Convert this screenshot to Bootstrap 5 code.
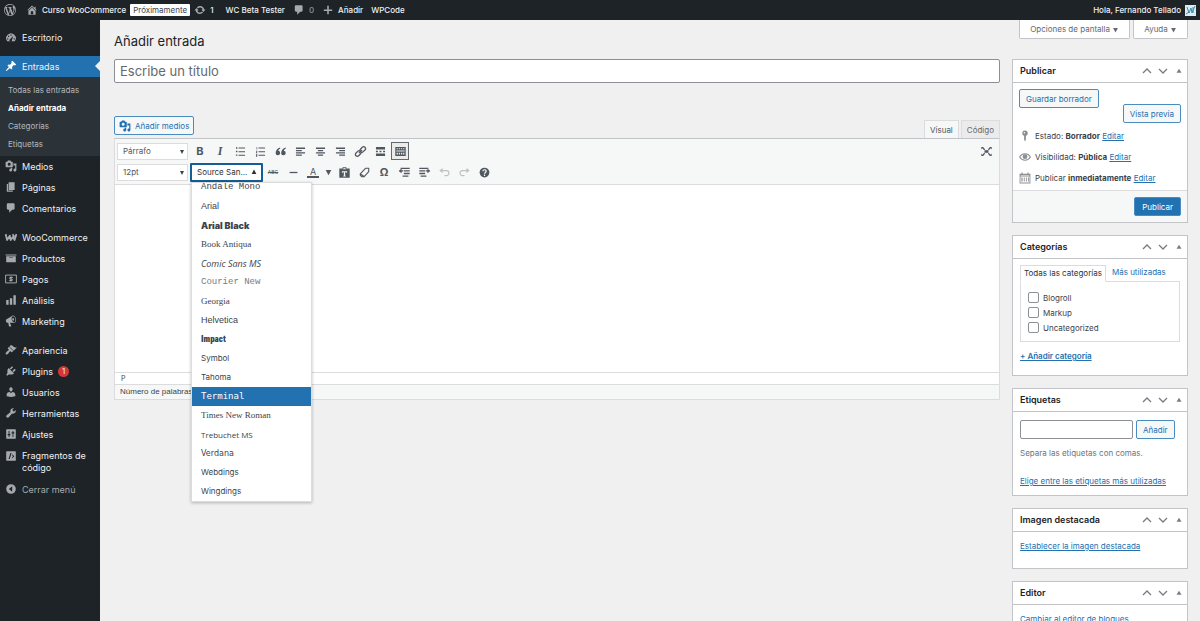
<!DOCTYPE html>
<html lang="es">
<head>
<meta charset="utf-8">
<meta name="viewport" content="width=device-width, initial-scale=1">
<title>Añadir entrada</title>
<link href="https://cdn.jsdelivr.net/npm/bootstrap@5.3.0/dist/css/bootstrap.min.css" rel="stylesheet">
<style>
:root{--ink:#1d2327;--ui:#3c434a;--blue:#2271b1;--line:#c3c4c7;--soft:#f6f7f7}
html{scrollbar-width:none}
body{font:8px/12px Inter,"Liberation Sans",sans-serif;color:var(--ui);background:#f0f0f1}
svg{fill:currentColor;flex:none}
.ic{width:12px;height:12px}
a{color:var(--blue)}
.adminbar{height:20px;background:var(--ink);color:#f0f0f1;padding:0 4px;font-weight:500}
.adminbar a{color:inherit;text-decoration:none}
.adminbar .ic{color:#a7aaad}
.adminbar .soon{background:#fff;color:#3c434a;padding:0 3px;border-radius:1px;font-weight:400}
.site{margin-left:10px}
.avatar{width:11px;height:11px}
.sidebar{width:100px;background:var(--ink);padding-top:7px;flex:none}
.sidebar a{color:#f0f0f1;text-decoration:none}
.menu-item{min-height:21px;padding:4px 5px;gap:5px;line-height:13px;font-size:9px;font-weight:400;display:flex;align-items:flex-start}
.menu-item .ic{color:#a7aaad}
.menu-item.wide-text{line-height:12px;padding:5px}
.menu-gap{margin-top:8px}
.menu-item.current{background:var(--blue);position:relative}
.menu-item.current .ic{color:#fff}
.menu-item.current::after{content:"";position:absolute;right:0;top:5px;border:5px solid transparent;border-right-color:#f0f0f1;border-left-width:0}
.submenu{background:#2c3338;padding:4px 0 3px}
.submenu a{display:block;line-height:18px;padding-left:8px;color:#b4b9be}
.submenu a.on{color:#fff;font-weight:700}
.count{background:#d63638;border-radius:6px;min-width:11px;height:11px;line-height:11px;text-align:center;font-size:8px;align-self:center}
.sidebar .closer{color:#a7aaad}
.main-col{padding:0 12px 0 14px}
.meta-tabs{gap:3px}
.meta-tabs button{background:#fff;border:1px solid var(--line);border-top:0;border-radius:0 0 2px 2px;color:#646970;height:19px;padding:0 10px}
h1{font-size:13px;line-height:19px;font-weight:400;color:var(--ink);margin:0}
.columns{gap:12px}
.title-input{height:24px;border:1px solid #8c8f94;border-radius:2px;font-size:13px;padding:0 5px;color:#2c3338}
.title-input::placeholder{color:#646970;opacity:1}
.side-col{width:176px;flex:none}
.wbtn{border:1px solid #4a8bc0;border-radius:2px;color:var(--blue);background:var(--soft);height:19px;padding:0 6px}
.wbtn.media-btn{padding:0 4px;margin-bottom:3px}
.wbtn.solid{background:var(--blue);color:#fff;padding:0 7px}
.preview-row{margin-top:-4px}
.ed-head{margin-top:33px}
.ed-tabs{gap:2px}
.ed-tabs button{height:18px;border:1px solid #dcdcde;border-bottom:0;background:#ebebec;color:#646970;padding:0 5px}
.ed-tabs .on{background:var(--soft);color:#50575e}
.editor{border:1px solid #dcdcde;border-top-color:var(--line);background:#fff}
.toolbars{background:var(--soft);border-bottom:1px solid #dcdcde;padding:2px 3px 2px 2px}
.tool-row{height:20px}
.tool-row + .tool-row{margin-top:1px}
.picker{appearance:none;width:71px;height:17px;border:1px solid #dcdcde;background:#fff;font-size:8px;color:#50575e;padding:0 5px;margin-right:2px}
.pick-wrap{position:relative}
.pick-wrap::after{content:"";position:absolute;right:6px;top:7px;border:solid transparent;border-width:4px 2px 0;border-top-color:#3c434a;pointer-events:none}
.font-btn{width:73px;height:19px;border:2px solid #135e96;background:#fff;border-radius:1px;padding:0 4px 0 5px;color:#2c3338}
.tb{width:20px;height:18px;border:0;background:none;padding:0;color:#50575e;display:flex;align-items:center;justify-content:center}
.tb svg{width:13px;height:13px}
.tb b{font-size:11px}
.tb i{font:italic 700 12px "Liberation Serif",serif}
.tb s{font-size:5px}
.tb .swatch{font-size:9px;line-height:9px;border-bottom:2px solid #50575e;padding:0 3px}
.tb.faded{color:#bfc2c5}
.tb.active{width:18px;margin:0 1px;border:1px solid #646970;background:#ebebeb}
.tb.caret{width:11px}
.tb.caret svg{width:7px}
.font-list{position:absolute;left:1px;top:19px;width:121px;height:320px;overflow:hidden;background:#fff;border:1px solid #dcdcde;box-shadow:0 1px 3px rgba(0,0,0,.25);z-index:5;display:flex;flex-direction:column;justify-content:flex-end}
.font-list button{border:0;background:none;text-align:left;height:19px;line-height:19px;padding:0 9px;color:#3c434a;flex:none;white-space:nowrap}
.font-list .chosen{background:var(--blue);color:#fff}
.f-mono{font-family:"Liberation Mono",monospace;font-size:9px}
.font-list .f-light{color:#787c82}
.f-sans{font-family:"Liberation Sans",sans-serif;font-size:9px}
.f-black{font-family:Inter,sans-serif;font-size:9px;font-weight:900}
.f-serif{font-family:"Liberation Serif",serif;font-size:9px}
.f-comic{font-family:"Open Sans",sans-serif;font-size:9px;font-style:italic;font-weight:500}
.f-impact{font-family:"Roboto Condensed","Liberation Sans Narrow","DejaVu Sans Condensed",sans-serif;font-size:9px;font-weight:900}
.f-term{font-family:"DejaVu Sans Mono",monospace;font-size:9px}
.f-treb{font-family:"Open Sans",sans-serif;font-size:8px}
.f-verd{font-family:"DejaVu Sans",sans-serif;font-size:8px}
.canvas{height:187px;border:0;resize:none;display:block;width:100%;outline:0}
.path{height:12px;border-top:1px solid #dcdcde;padding:0 6px;font-size:7px}
.status{height:15px;border-top:1px solid #dcdcde;background:var(--soft);padding:1px 5px;font-family:"Liberation Sans",sans-serif}
.box{background:#fff;border:1px solid var(--line);margin-bottom:12px}
.box header{height:23px;border-bottom:1px solid var(--line);padding:0 0 0 7px}
.box h2{font-size:9px;line-height:12px;font-weight:600;color:var(--ink);margin:0}
.box header button{border:0;background:none;padding:0;color:#787c82;width:16px;height:16px;display:flex;align-items:center;justify-content:center}
.box header svg{width:10px;height:10px}
.box .inner{padding:8px 7px}
.box .cat-inner{padding:6px 7px 13px}
.publish-inner{padding:6px}
.facts{gap:9px;padding-top:7px}
.facts svg{color:#8c8f94}
.publish-foot{background:var(--soft);border-top:1px solid #dcdcde;padding:6px}
.cat-tabs a{padding:0 6px;line-height:15px;text-decoration:none}
.cat-tabs .on{border:1px solid #dcdcde;border-bottom-color:#fff;color:#2c3338;margin-bottom:-1px;background:#fff;padding:0 3px}
.cat-panel{border:1px solid #dcdcde;padding:8px 7px 6px}
.cat-panel label{display:flex;align-items:center;gap:4px;height:15px}
.cat-panel input{appearance:none;width:11px;height:11px;border:1px solid #8c8f94;border-radius:2px;background:#fff;margin:0}
.tag-row{gap:3px}
.tag-input{height:19px;border:1px solid #8c8f94;border-radius:2px;width:113px;padding:0 4px;font-size:8px}
</style>
</head>
<body>
<svg width="0" height="0" class="position-absolute" aria-hidden="true">
<symbol id="wp" viewBox="0 0 20 20"><path d="M20 10c0-5.51-4.49-10-10-10C4.48 0 0 4.49 0 10c0 5.52 4.48 10 10 10 5.51 0 10-4.48 10-10zM7.78 15.37L4.37 6.22c.55-.02 1.17-.08 1.17-.08.5-.06.44-1.13-.06-1.11 0 0-1.45.11-2.37.11-.18 0-.37 0-.58-.01C4.12 2.69 6.87 1.11 10 1.11c2.33 0 4.45.87 6.05 2.34-.68-.11-1.65.39-1.65 1.58 0 .74.45 1.36.9 2.1.35.61.55 1.36.55 2.46 0 1.49-1.4 5-1.4 5l-3.03-8.37c.54-.02.82-.17.82-.17.5-.05.44-1.25-.06-1.22 0 0-1.44.12-2.38.12-.87 0-2.33-.12-2.33-.12-.5-.03-.56 1.2-.06 1.22l.92.08 1.26 3.41zM17.41 10c.24-.64.74-1.87.43-4.25.7 1.29 1.05 2.71 1.05 4.25 0 3.29-1.73 6.24-4.4 7.78.97-2.59 1.94-5.2 2.92-7.78zM6.1 18.09C3.12 16.65 1.11 13.53 1.11 10c0-1.3.23-2.48.72-3.59C3.25 10.3 4.67 14.2 6.1 18.09zm4.03-6.63l2.58 6.98c-.86.29-1.76.45-2.71.45-.79 0-1.57-.11-2.29-.33.81-2.38 1.62-4.74 2.42-7.1z"/></symbol>
<symbol id="home" viewBox="0 0 20 20"><path d="M16 8.5l1.53 1.53-1.06 1.06L10 4.6l-6.47 6.49-1.06-1.06L10 2.5l4 4v-2h2v4zm-6-2.46l6 5.99V18H4v-5.97zM12 17v-5H8v5h4z"/></symbol>
<symbol id="update" viewBox="0 0 20 20"><path d="M10.2 3.28c3.53 0 6.43 2.61 6.92 6h2.08l-3.5 4-3.5-4h2.32c-.45-1.97-2.21-3.45-4.32-3.45-1.45 0-2.73.71-3.54 1.78L4.95 5.66C6.23 4.2 8.11 3.28 10.2 3.28zm-.4 13.44c-3.52 0-6.43-2.61-6.92-6H.8l3.5-4 3.5 4H5.48c.45 1.97 2.21 3.45 4.32 3.45 1.45 0 2.73-.71 3.54-1.78l1.71 1.95c-1.28 1.46-3.15 2.38-5.25 2.38z"/></symbol>
<symbol id="comment" viewBox="0 0 20 20"><path d="M5 2h9c1.1 0 2 .9 2 2v7c0 1.1-.9 2-2 2h-2l-5 5v-5H5c-1.1 0-2-.9-2-2V4c0-1.1.9-2 2-2z"/></symbol>
<symbol id="plus" viewBox="0 0 20 20"><path d="M17 9v2.6h-5.7V17H8.700v-5.400H3V9h5.700V3h2.600v6z"/></symbol>
<symbol id="dash" viewBox="0 0 20 20"><path fill-rule="evenodd" d="M3.76 17h12.48A8 8 0 1 0 3.760 17zM9 6h2v2H9zM5 8h2v2H5zM3.500 12h2v2h-2zM14.500 12h2v2h-2zM8 14l6-6-2.500 7A2 2 0 1 1 8 14z"/></symbol>
<symbol id="pin" viewBox="0 0 20 20"><path d="M10.440 3.020l1.820-1.820 6.360 6.350-1.830 1.820c-1.050-.68-2.480-.57-3.410.36l-.75.75c-.92.93-1.040 2.350-.35 3.410l-1.830 1.820-2.410-2.410-2.800 2.790c-.42.42-3.380 2.710-3.800 2.290s1.860-3.390 2.280-3.810l2.790-2.790L4.100 9.360l1.830-1.820c1.050.69 2.480.57 3.400-.36l.75-.75c.93-.92 1.050-2.350.36-3.410z"/></symbol>
<symbol id="media" viewBox="0 0 20 20"><path d="M13 11V4c0-.55-.45-1-1-1h-1.670L9 1H5L3.670 3H2c-.55 0-1 .45-1 1v7c0 .55.45 1 1 1h10c.55 0 1-.45 1-1zM7 4.500c1.380 0 2.500 1.120 2.500 2.500S8.380 9.500 7 9.500 4.500 8.380 4.500 7 5.620 4.500 7 4.500zM14 6h5v10.500c0 1.380-1.120 2.500-2.500 2.500S14 17.880 14 16.500s1.120-2.500 2.500-2.500c.17 0 .34.02.5.05V9h-3V6zm-4 8.050V13h2v3.500c0 1.380-1.120 2.500-2.500 2.500S7 17.880 7 16.500 8.120 14 9.500 14c.17 0 .34.02.5.05z"/></symbol>
<symbol id="page" viewBox="0 0 20 20"><path d="M6 15V2h10v13H6zm-1 1h8v2H3V5h2v11z"/></symbol>
<symbol id="woo" viewBox="0 0 20 20"><path d="M1 5l2.500 10L8 8l1.500 7L13 10l3 5 3-10M12.500 5.500L16 10" fill="none" stroke="currentColor" stroke-width="3" stroke-linejoin="round"/></symbol>
<symbol id="archive" viewBox="0 0 20 20"><path d="M19 4v2H1V4h18zM2 7h16v10H2V7zm11 3V9H7v1h6z"/></symbol>
<symbol id="pay" viewBox="0 0 20 20"><path d="M1 3.500h18v13H1zM13 7.500H8v2.500h4v2.500H7M10 5.500v9" fill="none" stroke="currentColor" stroke-width="1.600"/></symbol>
<symbol id="bars" viewBox="0 0 20 20"><path d="M18 18V2h-4v16h4zm-6 0V7H8v11h4zm-6 0v-8H2v8h4z"/></symbol>
<symbol id="mega" viewBox="0 0 20 20"><path d="M18.150 5.940c.46 1.620.38 3.220-.02 4.480-.42 1.280-1.260 2.180-2.300 2.480-.16.06-.26.06-.4.06-.06.02-.12.02-.18.02-.06.02-.14.02-.22.02h-6.800l2.220 5.500c.02.14-.06.26-.14.34-.08.1-.24.16-.34.16H6.950c-.1 0-.26-.06-.34-.16-.08-.08-.16-.2-.14-.34l-1-5.500H4.250l-.02-.02c-.5.06-1.080-.18-1.540-.62s-.88-1.080-1.060-1.880c-.24-.8-.2-1.560-.02-2.200.18-.62.58-1.080 1.060-1.300l.02-.02 9-5.400c.1-.06.18-.1.24-.16.06-.04.14-.08.24-.12.16-.08.28-.12.5-.18 1.040-.3 2.240.1 3.220.98s1.840 2.240 2.260 3.860zm-2.580 5.980h-.02c.4-.1.74-.34 1.040-.7.58-.7.86-1.760.86-3.040 0-.64-.1-1.300-.28-1.980-.34-1.360-1.020-2.500-1.780-3.240s-1.680-1.100-2.460-.88c-.82.22-1.400.96-1.700 2-.32 1.040-.28 2.360.06 3.720.38 1.360 1 2.500 1.800 3.240.78.74 1.620 1.100 2.480.88zm-2.540-7.080c.22-.04.42-.02.62.04.38.16.76.48 1.020 1s.42 1.200.42 1.780c0 .3-.04.56-.12.8-.18.48-.44.84-.86.94-.34.1-.8-.06-1.140-.4s-.64-.86-.78-1.500c-.18-.62-.12-1.240.02-1.720s.48-.84.82-.94z"/></symbol>
<symbol id="brush" viewBox="0 0 20 20"><path d="M14.480 11.060L7.410 3.990l1.500-1.500c.5-.56 2.300-.47 3.510.32 1.210.8 1.430 1.280 2.910 2.100 1.180.64 2.450 1.260 4.450.85zm-.71.71L6.700 4.700 4.930 6.470c-.39.39-.39 1.020 0 1.410l1.060 1.060c.39.39.39 1.030 0 1.420-.6.6-1.430 1.110-2.210 1.690-.35.26-.7.53-1.010.84C1.430 14.230.4 16.080 1.400 17.070c.99 1 2.840-.03 4.180-1.360.31-.31.58-.66.85-1.020.57-.78 1.080-1.610 1.690-2.210.39-.39 1.020-.39 1.410 0l1.060 1.060c.39.39 1.020.39 1.410 0z"/></symbol>
<symbol id="plug" viewBox="0 0 20 20"><path d="M13.110 4.360L9.870 7.600 8 5.730l3.240-3.240c.35-.34 1.050-.2 1.560.32.52.51.66 1.210.31 1.550zm-8 1.770l.91-1.120 9.010 9.010-1.190.84c-.71.71-2.630 1.160-3.820 1.160H6.140L4.900 17.260c-.59.59-1.540.59-2.120 0-.59-.58-.59-1.530 0-2.120l1.240-1.240v-3.880c0-1.130.4-3.190 1.090-3.890zm7.260 3.970l3.240-3.240c.34-.35 1.040-.21 1.550.31.52.51.66 1.210.31 1.550l-3.240 3.250z"/></symbol>
<symbol id="user" viewBox="0 0 20 20"><path d="M10 9.250c-2.270 0-2.730-3.440-2.730-3.440C7 4.020 7.820 2 9.970 2c2.160 0 2.980 2.020 2.710 3.810 0 0-.41 3.440-2.680 3.440zm0 2.570L12.720 10c2.390 0 4.520 2.330 4.520 4.530v2.490s-3.650 1.130-7.240 1.130c-3.650 0-7.240-1.130-7.240-1.130v-2.490c0-2.250 1.940-4.480 4.470-4.480z"/></symbol>
<symbol id="wrench" viewBox="0 0 20 20"><path d="M16.680 9.770c-1.340 1.340-3.300 1.670-4.950.99l-5.410 6.520c-.99.99-2.590.99-3.580 0s-.99-2.590 0-3.570l6.520-5.420c-.68-1.650-.35-3.610.99-4.950 1.280-1.280 3.120-1.620 4.720-1.060l-2.890 2.890 2.820 2.820 2.860-2.870c.53 1.580.18 3.390-1.080 4.650z"/></symbol>
<symbol id="sliders" viewBox="0 0 20 20"><path fill-rule="evenodd" d="M3 2h14a1 1 0 0 1 1 1v14a1 1 0 0 1-1 1H3a1 1 0 0 1-1-1V3a1 1 0 0 1 1-1zM6 5v5H4.500v2H6v3h1.500v-3H9v-2H7.500V5zM12.500 15h1.500V9h1.500V7H14V5h-1.500v2H11v2h1.500z"/></symbol>
<symbol id="code" viewBox="0 0 20 20"><path fill-rule="evenodd" d="M3 2h14a1 1 0 0 1 1 1v14a1 1 0 0 1-1 1H3a1 1 0 0 1-1-1V3a1 1 0 0 1 1-1zM9 5L6 15h1.800L11 5zM12 7v2l1.500 1.500L12 12v2l3.500-3.500z"/></symbol>
<symbol id="collapse" viewBox="0 0 20 20"><path fill-rule="evenodd" d="M10 2a8 8 0 1 1 0 16 8 8 0 0 1 0-16zM12 5.500L6.500 10l5.500 4.500z"/></symbol>
<symbol id="al" viewBox="0 0 20 20"><path d="M3 4h14v2H3zM3 7.500h9v2H3zM3 11h14v2H3zM3 14.500h9v2H3z"/></symbol>
<symbol id="ac" viewBox="0 0 20 20"><path d="M3 4h14v2H3zM6 7.500h8v2H6zM3 11h14v2H3zM6 14.500h8v2H6z"/></symbol>
<symbol id="ar" viewBox="0 0 20 20"><path d="M3 4h14v2H3zM8 7.500h9v2H8zM3 11h14v2H3zM8 14.500h9v2H8z"/></symbol>
<symbol id="ul" viewBox="0 0 20 20"><path d="M7 4h10v1.500H7zM7 9.500h10V11H7zM7 15h10v1.500H7zM3 3.500h2.200v2.200H3zM3 9h2.200v2.200H3zM3 14.500h2.200v2.200H3z"/></symbol>
<symbol id="ol" viewBox="0 0 20 20"><path d="M7 4h10v1.500H7zM7 9.500h10V11H7zM7 15h10v1.500H7zM4 3h1v4H4zM3 9h2v1.500l-1 1h1v1H3v-1l1-1.500H3zM3 14h2v4H3v-1h1v-.5H3v-1h1V15H3z"/></symbol>
<symbol id="quote" viewBox="0 0 20 20"><path d="M9.500 4C5.500 5 2.500 8.500 2.500 12.500a3.500 3.500 0 1 0 4.200-3.500c0-1.500 1.300-2.700 2.800-3.200zM18 4c-4 1-7 4.500-7 8.500A3.500 3.500 0 1 0 15.200 9c0-1.500 1.300-2.700 2.800-3.200z"/></symbol>
<symbol id="link" viewBox="0 0 20 20"><g fill="none" stroke="currentColor" stroke-width="1.900"><rect x="8.800" y="4" width="9.500" height="5.800" rx="2.900" transform="rotate(-45 13.500 6.900)"/><rect x="1.700" y="10.200" width="9.500" height="5.800" rx="2.900" transform="rotate(-45 6.500 13.100)"/><path d="M7.500 12.500l5-5"/></g></symbol>
<symbol id="more" viewBox="0 0 20 20"><path d="M3 3h14v4H3zM3 13h14v4H3zM3 9h3v2H3zM8.500 9h3v2h-3zM14 9h3v2h-3z"/></symbol>
<symbol id="sink" viewBox="0 0 20 20"><path fill-rule="evenodd" d="M2 3h16v14H2zM4 5v1.500h2V5zM7.300 5v1.500h2V5zM10.700 5v1.500h2V5zM14 5v1.500h2V5zM3.500 8.500V10h13V8.500zM4 12v2.500h2V12zM7.300 12v2.500h2V12zM10.700 12v2.500h2V12zM14 12v2.500h2V12z"/></symbol>
<symbol id="hr" viewBox="0 0 20 20"><path d="M4 9h12v2H4z"/></symbol>
<symbol id="paste" viewBox="0 0 20 20"><path fill-rule="evenodd" d="M2 4h4l1.500-2h5L14 4h4v14H2zM7 5h6V4h-2L10 3 9 4H7zM6 8v2.500h1.500V9.500H9V15H8v1h4v-1h-1V9.500h1.500v1H14V8z"/></symbol>
<symbol id="eraser" viewBox="0 0 20 20"><path d="M11.500 3.500h5v5l-7 8h-4L3.500 14v-2zM3.800 12.300l5 3.500" fill="none" stroke="currentColor" stroke-width="1.700" stroke-linejoin="round"/></symbol>
<symbol id="outd" viewBox="0 0 20 20"><path d="M4 2.500h14v2H4zM9 6.500h9v2H9zM9 10.500h9v2H9zM7 14.500h9v2H7zM8 8.500H5.500v2.500L1 7.500 5.500 4v2.500H8z"/></symbol>
<symbol id="ind" viewBox="0 0 20 20"><path d="M2 2.500h14v2H2zM2 6.500h9v2H2zM2 10.500h9v2H2zM4 14.500h9v2H4zM12 8.500h2.500v2.500L19 7.500 14.500 4v2.500H12z"/></symbol>
<symbol id="undo" viewBox="0 0 20 20"><path d="M7 3v3.200h6a4.500 4.500 0 0 1 0 9.500h-3v-1.700h3a2.900 2.900 0 0 0 0-6H7V11L2 7z"/></symbol>
<symbol id="redo" viewBox="0 0 20 20"><path d="M13 3v3.200H7a4.500 4.500 0 0 0 0 9.500h3v-1.700H7a2.900 2.900 0 0 1 0-6h6V11l5-4z"/></symbol>
<symbol id="help" viewBox="0 0 20 20"><circle cx="10" cy="10" r="7.500"/><path d="M7.500 8.200C7.500 5 12.500 5 12.500 8c0 2-2.500 1.800-2.500 4M10 13.200v2" fill="none" stroke="#f6f7f7" stroke-width="1.900"/></symbol>
<symbol id="full" viewBox="0 0 20 20"><path d="M2 3h4L5 4l3 2.500L6.500 8 3.500 5 2 7zM18 3h-4l1 1-3 2.500L13.500 8l3-3L18 7zM2 17h4l-1-1 3-2.500L6.500 12l-3 3L2 13zM18 17h-4l1-1-3-2.500 1.500-1.500 3 3 1.500-2z"/><path d="M7 8h6v4H7z"/></symbol>
<symbol id="up" viewBox="0 0 10 10"><path d="M1 7l4-4 4 4" fill="none" stroke="currentColor" stroke-width="1.300"/></symbol>
<symbol id="down" viewBox="0 0 10 10"><path d="M1 3l4 4 4-4" fill="none" stroke="currentColor" stroke-width="1.300"/></symbol>
<symbol id="tri" viewBox="0 0 10 10"><path d="M5 2.800l2.500 4h-5z"/></symbol>
<symbol id="trid" viewBox="0 0 10 10"><path d="M5 9L1 1.500h8z"/></symbol>
<symbol id="triu" viewBox="0 0 10 10"><path d="M5 1l4 7.500H1z"/></symbol>
<symbol id="key" viewBox="0 0 20 20"><path d="M10 1a4.500 4.500 0 0 1 1.500 8.800V16L10 19l-1.500-3V9.800A4.500 4.500 0 0 1 10 1z"/><circle cx="9" cy="4.500" r="1.200" fill="#fff"/></symbol>
<symbol id="eye" viewBox="0 0 20 20"><path d="M1 10c4-7 14-7 18 0-4 7-14 7-18 0z" fill="none" stroke="currentColor" stroke-width="1.700"/><circle cx="10" cy="9.500" r="4"/></symbol>
<symbol id="cal" viewBox="0 0 20 20"><path fill-rule="evenodd" d="M1 3h3V1h2v2h8V1h2v2h3v16H1zM2.500 7.500v10h15v-10zM4 9h2v7H4zM8 9h1.500v7H8zM11.500 9H13v7h-1.500zM15 9h1.500v7H15zM3 4.800v1h14v-1z"/></symbol>
</svg>

<nav class="adminbar d-flex align-items-center" aria-label="Barra">
  <a href="#" aria-label="WordPress"><svg class="ic d-block"><use href="#wp"/></svg></a>
  <a href="#" class="site d-flex align-items-center"><svg class="ic me-1"><use href="#home"/></svg>Curso WooCommerce</a>
  <a href="#" class="soon ms-1">Próximamente</a>
  <a href="#" class="d-flex align-items-center ms-1"><svg class="ic me-1"><use href="#update"/></svg>1</a>
  <a href="#" class="ms-2 ps-1">WC Beta Tester</a>
  <a href="#" class="d-flex align-items-center ms-2"><svg class="ic me-1"><use href="#comment"/></svg><span class="opacity-50">0</span></a>
  <a href="#" class="d-flex align-items-center ms-2"><svg class="ic me-1"><use href="#plus"/></svg>Añadir</a>
  <a href="#" class="ms-2">WPCode</a>
  <a href="#" class="d-flex align-items-center ms-auto gap-1">Hola, Fernando Tellado
    <svg class="avatar" viewBox="0 0 11 11"><path fill="#d9edf3" d="M0 0h11v11H0z"/><path d="M2 2l2 6 2-5 1 5 3-7M1 9l3-2M8 2v6" fill="none" stroke="#3b8ba8" stroke-width="1"/></svg></a>
</nav>

<div class="d-flex min-vh-100">
  <nav class="sidebar" aria-label="Menú">
    <a href="#" class="menu-item"><svg class="ic"><use href="#dash"/></svg>Escritorio</a>
    <a href="#" class="menu-item menu-gap current"><svg class="ic"><use href="#pin"/></svg>Entradas</a>
    <div class="submenu">
      <a href="#">Todas las entradas</a><a href="#" class="on">Añadir entrada</a><a href="#">Categorías</a><a href="#">Etiquetas</a>
    </div>
    <a href="#" class="menu-item"><svg class="ic"><use href="#media"/></svg>Medios</a>
    <a href="#" class="menu-item"><svg class="ic"><use href="#page"/></svg>Páginas</a>
    <a href="#" class="menu-item"><svg class="ic"><use href="#comment"/></svg>Comentarios</a>
    <a href="#" class="menu-item menu-gap"><svg class="ic"><use href="#woo"/></svg>WooCommerce</a>
    <a href="#" class="menu-item"><svg class="ic"><use href="#archive"/></svg>Productos</a>
    <a href="#" class="menu-item"><svg class="ic"><use href="#pay"/></svg>Pagos</a>
    <a href="#" class="menu-item"><svg class="ic"><use href="#bars"/></svg>Análisis</a>
    <a href="#" class="menu-item"><svg class="ic"><use href="#mega"/></svg>Marketing</a>
    <a href="#" class="menu-item menu-gap"><svg class="ic"><use href="#brush"/></svg>Apariencia</a>
    <a href="#" class="menu-item"><svg class="ic"><use href="#plug"/></svg>Plugins <span class="count">1</span></a>
    <a href="#" class="menu-item"><svg class="ic"><use href="#user"/></svg>Usuarios</a>
    <a href="#" class="menu-item"><svg class="ic"><use href="#wrench"/></svg>Herramientas</a>
    <a href="#" class="menu-item"><svg class="ic"><use href="#sliders"/></svg>Ajustes</a>
    <a href="#" class="menu-item wide-text"><svg class="ic"><use href="#code"/></svg>Fragmentos de código</a>
    <a href="#" class="menu-item closer"><svg class="ic"><use href="#collapse"/></svg>Cerrar menú</a>
  </nav>

  <main class="flex-grow-1 main-col">
    <div class="d-flex justify-content-between align-items-start">
      <h1 class="pt-2 mt-1">Añadir entrada</h1>
      <div class="meta-tabs d-flex"><button type="button">Opciones de pantalla <svg width="7" height="6"><use href="#trid"/></svg></button><button type="button">Ayuda <svg width="7" height="6"><use href="#trid"/></svg></button></div>
    </div>
    <div class="columns d-flex pt-2">
      <section class="flex-grow-1">
        <input class="title-input w-100 d-block" type="text" placeholder="Escribe un título" aria-label="Título">
        <div class="ed-head d-flex justify-content-between align-items-end">
          <button type="button" class="wbtn media-btn d-flex align-items-center gap-1"><svg class="ic"><use href="#media"/></svg>Añadir medios</button>
          <div class="ed-tabs d-flex"><button type="button" class="on">Visual</button><button type="button">Código</button></div>
        </div>
        <div class="editor">
          <div class="toolbars">
            <div class="tool-row d-flex align-items-center">
              <span class="pick-wrap"><select class="picker" aria-label="Formato"><option>Párrafo</option></select></span>
              <button type="button" class="tb" aria-label="Negrita"><b>B</b></button>
              <button type="button" class="tb" aria-label="Cursiva"><i>I</i></button>
              <button type="button" class="tb" aria-label="Lista"><svg><use href="#ul"/></svg></button>
              <button type="button" class="tb" aria-label="Lista numerada"><svg><use href="#ol"/></svg></button>
              <button type="button" class="tb" aria-label="Cita"><svg><use href="#quote"/></svg></button>
              <button type="button" class="tb" aria-label="Izquierda"><svg><use href="#al"/></svg></button>
              <button type="button" class="tb" aria-label="Centrar"><svg><use href="#ac"/></svg></button>
              <button type="button" class="tb" aria-label="Derecha"><svg><use href="#ar"/></svg></button>
              <button type="button" class="tb" aria-label="Enlace"><svg><use href="#link"/></svg></button>
              <button type="button" class="tb" aria-label="Leer más"><svg><use href="#more"/></svg></button>
              <button type="button" class="tb active" aria-label="Barra"><svg><use href="#sink"/></svg></button>
              <button type="button" class="tb ms-auto" aria-label="Pantalla completa"><svg><use href="#full"/></svg></button>
            </div>
            <div class="tool-row d-flex align-items-center">
              <span class="pick-wrap"><select class="picker" aria-label="Tamaño"><option>12pt</option></select></span>
              <div class="position-relative">
                <button type="button" class="font-btn d-flex align-items-center justify-content-between" aria-expanded="true">Source San... <svg width="6" height="6"><use href="#triu"/></svg></button>
                <div class="font-list">
                  <button type="button" class="f-mono">Andale Mono</button>
                  <button type="button" class="f-sans">Arial</button>
                  <button type="button" class="f-black">Arial Black</button>
                  <button type="button" class="f-serif">Book Antiqua</button>
                  <button type="button" class="f-comic">Comic Sans MS</button>
                  <button type="button" class="f-mono f-light">Courier New</button>
                  <button type="button" class="f-serif">Georgia</button>
                  <button type="button" class="f-sans">Helvetica</button>
                  <button type="button" class="f-impact">Impact</button>
                  <button type="button">Symbol</button>
                  <button type="button">Tahoma</button>
                  <button type="button" class="f-term chosen">Terminal</button>
                  <button type="button" class="f-serif">Times New Roman</button>
                  <button type="button" class="f-treb">Trebuchet MS</button>
                  <button type="button" class="f-verd">Verdana</button>
                  <button type="button">Webdings</button>
                  <button type="button">Wingdings</button>
                </div>
              </div>
              <button type="button" class="tb" aria-label="Tachado"><s>ABC</s></button>
              <button type="button" class="tb" aria-label="Línea"><svg><use href="#hr"/></svg></button>
              <button type="button" class="tb" aria-label="Color"><span class="swatch">A</span></button>
              <button type="button" class="tb caret" aria-label="Colores"><svg><use href="#trid"/></svg></button>
              <button type="button" class="tb" aria-label="Pegar"><svg><use href="#paste"/></svg></button>
              <button type="button" class="tb" aria-label="Borrar formato"><svg><use href="#eraser"/></svg></button>
              <button type="button" class="tb" aria-label="Carácter"><b>Ω</b></button>
              <button type="button" class="tb" aria-label="Reducir sangría"><svg><use href="#outd"/></svg></button>
              <button type="button" class="tb" aria-label="Sangría"><svg><use href="#ind"/></svg></button>
              <button type="button" class="tb faded" aria-label="Deshacer"><svg><use href="#undo"/></svg></button>
              <button type="button" class="tb faded" aria-label="Rehacer"><svg><use href="#redo"/></svg></button>
              <button type="button" class="tb" aria-label="Ayuda"><svg><use href="#help"/></svg></button>
            </div>
          </div>
          <textarea class="canvas" aria-label="Contenido"></textarea>
          <div class="path">P</div>
          <div class="status">Número de palabras: 0</div>
        </div>
      </section>

      <aside class="side-col">
        <section class="box">
          <header class="d-flex align-items-center"><h2 class="me-auto">Publicar</h2><button type="button" aria-label="Subir"><svg><use href="#up"/></svg></button><button type="button" aria-label="Bajar"><svg><use href="#down"/></svg></button><button type="button" aria-label="Plegar"><svg><use href="#tri"/></svg></button></header>
          <div class="publish-inner">
            <div class="d-flex"><button type="button" class="wbtn">Guardar borrador</button></div>
            <div class="preview-row d-flex justify-content-end"><button type="button" class="wbtn">Vista previa</button></div>
            <div class="facts d-flex flex-column">
              <div class="d-flex gap-1"><svg class="ic"><use href="#key"/></svg><span>Estado: <b>Borrador</b> <a href="#">Editar</a></span></div>
              <div class="d-flex gap-1"><svg class="ic"><use href="#eye"/></svg><span>Visibilidad: <b>Pública</b> <a href="#">Editar</a></span></div>
              <div class="d-flex gap-1"><svg class="ic"><use href="#cal"/></svg><span>Publicar <b>inmediatamente</b> <a href="#">Editar</a></span></div>
            </div>
          </div>
          <div class="publish-foot d-flex justify-content-end"><button type="button" class="wbtn solid">Publicar</button></div>
        </section>
        <section class="box">
          <header class="d-flex align-items-center"><h2 class="me-auto">Categorías</h2><button type="button" aria-label="Subir"><svg><use href="#up"/></svg></button><button type="button" aria-label="Bajar"><svg><use href="#down"/></svg></button><button type="button" aria-label="Plegar"><svg><use href="#tri"/></svg></button></header>
          <div class="cat-inner">
            <div class="cat-tabs d-flex"><a href="#" class="on">Todas las categorías</a><a href="#">Más utilizadas</a></div>
            <div class="cat-panel">
              <label><input type="checkbox">Blogroll</label><label><input type="checkbox">Markup</label><label><input type="checkbox">Uncategorized</label>
            </div>
            <div class="mt-2"><a href="#" class="fw-semibold">+ Añadir categoría</a></div>
          </div>
        </section>
        <section class="box">
          <header class="d-flex align-items-center"><h2 class="me-auto">Etiquetas</h2><button type="button" aria-label="Subir"><svg><use href="#up"/></svg></button><button type="button" aria-label="Bajar"><svg><use href="#down"/></svg></button><button type="button" aria-label="Plegar"><svg><use href="#tri"/></svg></button></header>
          <div class="inner">
            <div class="tag-row d-flex"><input type="text" class="tag-input" aria-label="Etiquetas"><button type="button" class="wbtn">Añadir</button></div>
            <div class="mt-2 text-secondary">Separa las etiquetas con comas.</div>
            <div class="mt-3"><a href="#">Elige entre las etiquetas más utilizadas</a></div>
          </div>
        </section>
        <section class="box">
          <header class="d-flex align-items-center"><h2 class="me-auto">Imagen destacada</h2><button type="button" aria-label="Subir"><svg><use href="#up"/></svg></button><button type="button" aria-label="Bajar"><svg><use href="#down"/></svg></button><button type="button" aria-label="Plegar"><svg><use href="#tri"/></svg></button></header>
          <div class="inner pb-3"><a href="#">Establecer la imagen destacada</a></div>
        </section>
        <section class="box">
          <header class="d-flex align-items-center"><h2 class="me-auto">Editor</h2><button type="button" aria-label="Subir"><svg><use href="#up"/></svg></button><button type="button" aria-label="Bajar"><svg><use href="#down"/></svg></button><button type="button" aria-label="Plegar"><svg><use href="#tri"/></svg></button></header>
          <div class="inner"><a href="#">Cambiar al editor de bloques</a></div>
        </section>
      </aside>
    </div>
  </main>
</div>
<script src="https://cdn.jsdelivr.net/npm/bootstrap@5.3.0/dist/js/bootstrap.bundle.min.js"></script>
</body>
</html>
